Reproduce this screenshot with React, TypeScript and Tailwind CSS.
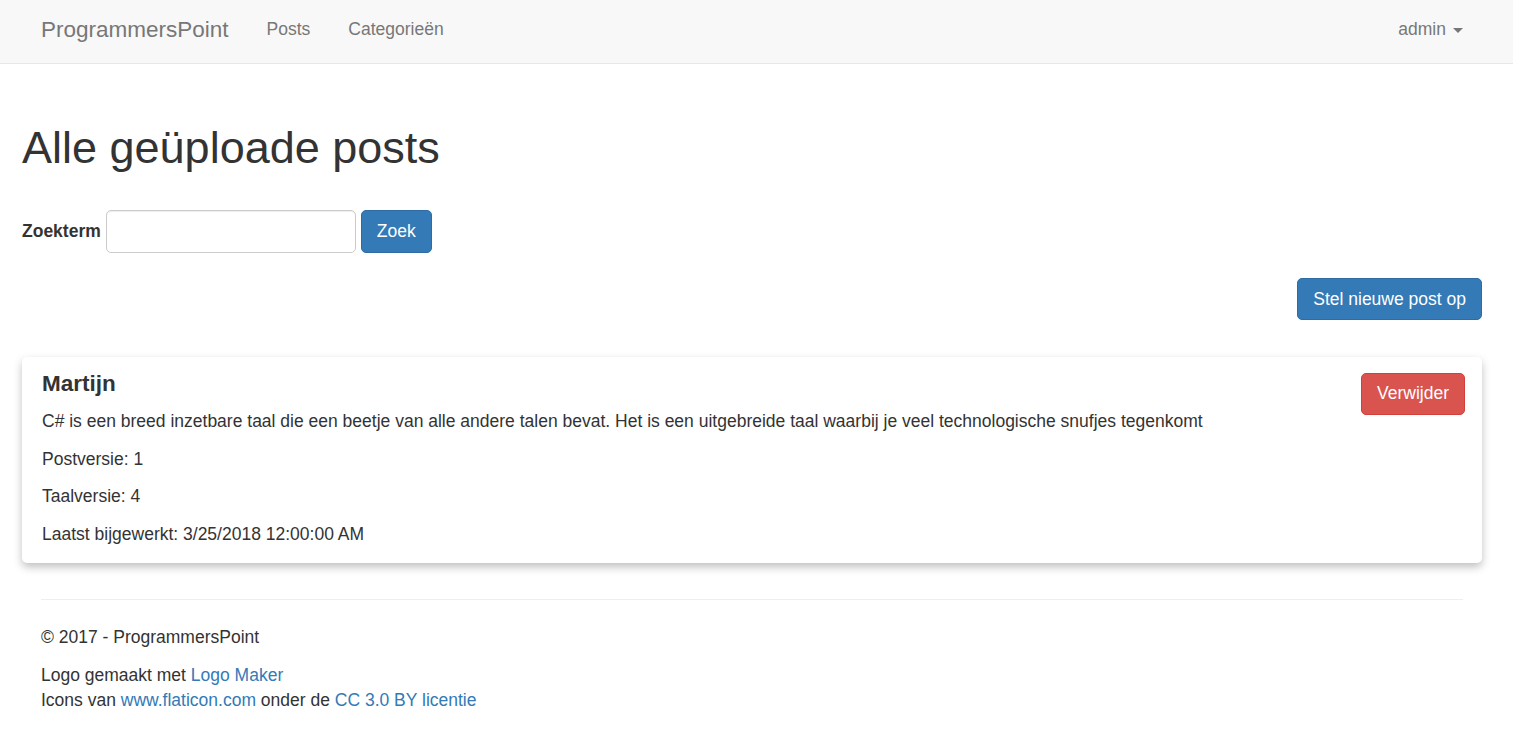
import React from 'react';

const Caret = () => (
    <span className="inline-block ml-[7px] align-middle w-0 h-0 border-t-[5px] border-t-[#777] border-x-[5px] border-x-transparent" />
);

export default function App() {
    return (
        <div className="min-h-screen bg-white text-[#333] font-['Liberation_Sans',Arial,sans-serif] text-[17.5px] leading-[25px]">
            {/* navbar */}
            <nav className="h-[64px] pb-[4px] bg-[#f8f8f8] border-b border-[#e7e7e7] flex items-center pl-[22px] pr-[31px]">
                <a className="px-[19px] text-[22.5px] leading-[25px] text-[#777]">ProgrammersPoint</a>
                <ul className="flex">
                    <li><a className="px-[19px] text-[#777]">Posts</a></li>
                    <li><a className="px-[19px] text-[#777]">Categorieën</a></li>
                </ul>
                <div className="ml-auto">
                    <a className="px-[19px] text-[#777]">
                        admin
                        <Caret />
                    </a>
                </div>
            </nav>

            {/* content */}
            <main className="pl-[22px] pr-[31px]">
                <h1 className="mt-[59px] mb-[37.5px] text-[45px] leading-[49.5px] font-normal">Alle geüploade posts</h1>

                <form className="flex items-center" onSubmit={(e) => e.preventDefault()}>
                    <label className="font-bold mr-[5px]">Zoekterm</label>
                    <input
                        type="text"
                        className="w-[250px] h-[43px] px-[15px] border border-[#ccc] rounded-[5px] shadow-[inset_0_1px_1px_rgba(0,0,0,0.075)] outline-none"
                    />
                    <button className="ml-[5px] h-[43px] px-[15px] bg-[#337ab7] border border-[#2e6da4] text-white rounded-[5px]">
                        Zoek
                    </button>
                </form>

                <div className="flex justify-end mt-[25px]">
                    <button className="h-[42px] px-[15px] bg-[#337ab7] border border-[#2e6da4] text-white rounded-[5px]">
                        Stel nieuwe post op
                    </button>
                </div>

                {/* post card */}
                <div className="mt-[37px] pl-[20px] pr-[17px] pt-[15px] pb-[4px] rounded-[5px] bg-white shadow-[0_4px_9px_0_rgba(0,0,0,0.25)]">
                    <button className="float-right mt-[1px] h-[41.5px] px-[15px] bg-[#d9534f] border border-[#d43f3a] text-white rounded-[5px]">
                        Verwijder
                    </button>
                    <h4 className="text-[22.5px] leading-[24.75px] font-bold mb-[12.5px]">Martijn</h4>
                    <p className="mb-[12.5px]">C# is een breed inzetbare taal die een beetje van alle andere talen bevat. Het is een uitgebreide taal waarbij je veel technologische snufjes tegenkomt</p>
                    <p className="mb-[12.5px]">Postversie: 1</p>
                    <p className="mb-[12.5px]">Taalversie: 4</p>
                    <p className="mb-[12.5px]">Laatst bijgewerkt: 3/25/2018 12:00:00 AM</p>
                </div>

                {/* footer */}
                <footer className="px-[19px]">
                    <hr className="mt-[36px] mb-[25px] border-0 border-t border-[#eee]" />
                    <p className="mb-[12.5px]">© 2017 - ProgrammersPoint</p>
                    <p>
                        Logo gemaakt met <a className="text-[#337ab7]">Logo Maker</a>
                        <br />
                        Icons van <a className="text-[#337ab7]">www.flaticon.com</a> onder de <a className="text-[#337ab7]">CC 3.0 BY licentie</a>
                    </p>
                </footer>
            </main>
        </div>
    );
}
